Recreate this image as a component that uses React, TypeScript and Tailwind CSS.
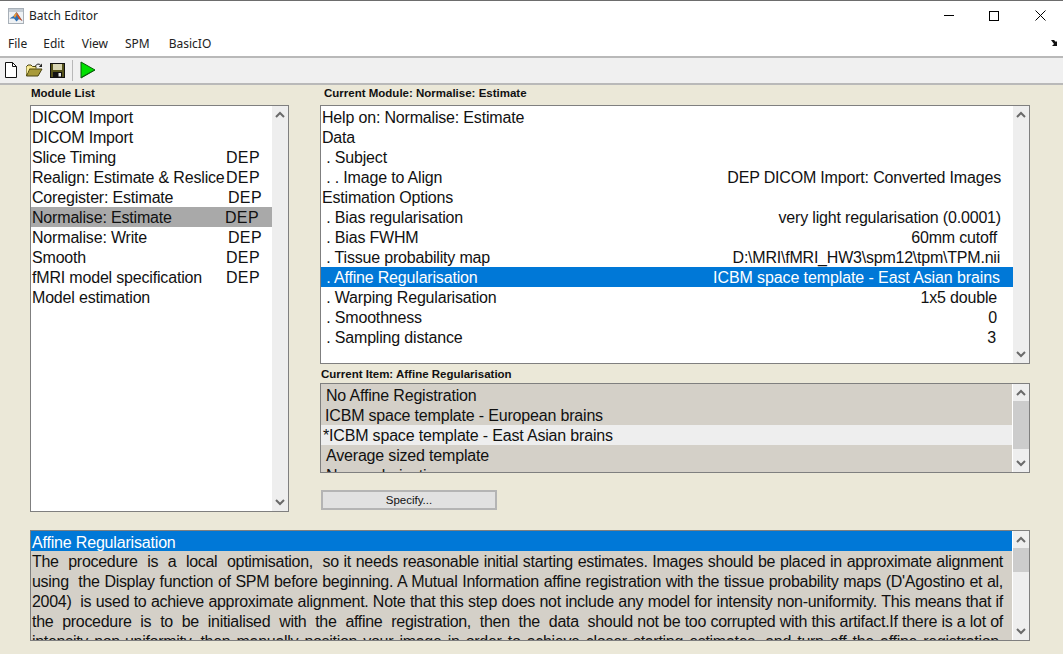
import React from "react";

const sans = "font-['Liberation_Sans',Arial,sans-serif]";

function Up() {
  return (
    <svg width="10" height="7" viewBox="0 0 10 7" className="block">
      <path d="M1 6 L5 2 L9 6" fill="none" stroke="#6a6a6a" strokeWidth="2" />
    </svg>
  );
}
function Down() {
  return (
    <svg width="10" height="7" viewBox="0 0 10 7" className="block">
      <path d="M1 1 L5 5 L9 1" fill="none" stroke="#6a6a6a" strokeWidth="2" />
    </svg>
  );
}

function Scrollbar({ thumbH = 0 }: { thumbH?: number }) {
  return (
    <div className="w-[16px] shrink-0 h-full bg-[#eeeeee] flex flex-col justify-between">
      <div className="h-[17px] shrink-0 flex items-center justify-center">
        <Up />
      </div>
      {thumbH > 0 && (
        <div className="flex-1 min-h-0">
          <div className="bg-[#cccccc]" style={{ height: thumbH }} />
        </div>
      )}
      <div className="h-[17px] shrink-0 flex items-center justify-center">
        <Down />
      </div>
    </div>
  );
}

const modules: [string, string, string][] = [
  ["DICOM Import", "", ""],
  ["DICOM Import", "", ""],
  ["Slice Timing", "DEP", "pr-[12px]"],
  ["Realign: Estimate & Reslice", "DEP", "pr-[12px]"],
  ["Coregister: Estimate", "DEP", "pr-[10px]"],
  ["Normalise: Estimate", "DEP", "pr-[13px]"],
  ["Normalise: Write", "DEP", "pr-[10px]"],
  ["Smooth", "DEP", "pr-[12px]"],
  ["fMRI model specification", "DEP", "pr-[12px]"],
  ["Model estimation", "", ""],
];

const items: [string, string, string, string][] = [
  ["Help on: Normalise: Estimate", "", "", ""],
  ["Data", "", "", ""],
  [" . Subject", "", "", ""],
  [" . . Image to Align", "DEP DICOM Import: Converted Images", "pr-[12px]", ""],
  ["Estimation Options", "", "", ""],
  [" . Bias regularisation", "very light regularisation (0.0001)", "pr-[12px]", ""],
  [" . Bias FWHM", "60mm cutoff", "pr-[16px]", ""],
  [" . Tissue probability map", "D:\\MRI\\fMRI_HW3\\spm12\\tpm\\TPM.nii", "pr-[13px]", "tracking-[-0.22px]"],
  [" . Affine Regularisation", "ICBM space template - East Asian brains", "pr-[13px]", "tracking-[-0.1px]"],
  [" . Warping Regularisation", "1x5 double", "pr-[16px]", ""],
  [" . Smoothness", "0", "pr-[16px]", ""],
  [" . Sampling distance", "3", "pr-[17px]", ""],
];

const helpLines = [
  "The  procedure  is  a  local  optimisation,  so it needs reasonable initial starting estimates. Images should be placed in approximate alignment",
  "using  the Display function of SPM before beginning. A Mutual Information affine registration with the tissue probability maps (D'Agostino et al,",
  "2004)  is used to achieve approximate alignment. Note that this step does not include any model for intensity non-uniformity. This means that if",
  "the  procedure  is  to  be  initialised  with  the  affine  registration,  then  the  data  should not be too corrupted with this artifact.If there is a lot of",
  "intensity non-uniformity, then manually position your image in order to achieve closer starting estimates, and turn off the affine registration.",
];

function Label({ children, className = "" }: { children: React.ReactNode; className?: string }) {
  return <div className={`text-[11.5px] leading-[13px] font-bold text-[#111] ${className}`}>{children}</div>;
}

export default function App() {
  return (
    <div className={`w-[1063px] h-[654px] overflow-hidden flex flex-col bg-[#ebe8d8] text-[#111] ${sans}`}>
      {/* Title bar */}
      <div className="h-[33px] shrink-0 bg-white border-t border-[#6d6d6d] flex items-center pl-[8px] pb-[3px] font-['Noto_Sans',sans-serif]">
        <svg width="16" height="16" viewBox="0 0 16 16" className="shrink-0">
          <rect x="0.5" y="0.5" width="15" height="15" fill="#eef1f4" stroke="#a8b0b8" />
          <rect x="1" y="1" width="14" height="3" fill="#c4ccd4" />
          <path d="M1.5 10.5 L5.5 8 L8.5 4 L14.5 13 L11 11 L8.5 13.5 L6 10.5 Z" fill="#2f6fb0" />
          <path d="M8.5 4 L14.5 13 L11 11 L8.6 7 Z" fill="#d9541e" />
          <path d="M5.5 8 L8.5 4 L8.6 7 L7 10 Z" fill="#f09a32" />
        </svg>
        <span className="ml-[5px] text-[12px] text-[#222]">Batch Editor</span>
        <div className="ml-auto flex items-center">
          <div className="w-[45px] flex justify-center">
            <div className="w-[10px] h-px bg-black" />
          </div>
          <div className="w-[46px] pr-[1px] flex justify-center">
            <div className="w-[10px] h-[10px] border border-black" />
          </div>
          <div className="w-[46px] flex justify-center">
            <svg width="11" height="11" viewBox="0 0 11 11">
              <path d="M0.5 0.5 L10.5 10.5 M10.5 0.5 L0.5 10.5" stroke="#000" strokeWidth="1" />
            </svg>
          </div>
        </div>
      </div>

      {/* Menu bar */}
      <div className="h-[25px] shrink-0 bg-white border-b-2 border-[#b9b9b9] flex items-center pl-[8px] pb-[2px] pr-[4px] text-[12px] text-[#222] font-['Noto_Sans',sans-serif]">
        <span>File</span>
        <span className="ml-[16px]">Edit</span>
        <span className="ml-[17px]">View</span>
        <span className="ml-[17px]">SPM</span>
        <span className="ml-[19px]">BasicIO</span>
        <svg width="8" height="7" viewBox="0 0 8 7" className="ml-auto">
          <path d="M0 0 H3 L5 2 L6 1 V6 H1 L3 4 Z" fill="#111" />
        </svg>
      </div>

      {/* Toolbar */}
      <div className="h-[27px] shrink-0 bg-[#f0f0f0] border-b-2 border-[#b9b9b9] flex items-center pl-[4px] pb-[1px]">
        <svg width="14" height="16" viewBox="0 0 14 16">
          <path d="M1.5 0.5 H8.5 L12.5 4.5 V15.5 H1.5 Z" fill="#fff" stroke="#111" />
          <path d="M8.5 0.5 V4.5 H12.5" fill="none" stroke="#111" />
        </svg>
        <svg width="17" height="14" viewBox="0 0 17 14" className="ml-[8px]">
          <path d="M0.5 13 V3.5 L2 2 H5 L6.5 3.5 H10 V5.5" fill="#f6e58a" stroke="#4a4410" />
          <path d="M0.5 13 L3.5 6 H16 L12 13 Z" fill="#a89a3a" stroke="#4a4410" />
          <path d="M3 6 L0.5 12 V4 H3 Z" fill="#fbf0a0" />
          <path d="M9.5 3 C10.5 0.8 13 0.5 14.5 2" fill="none" stroke="#222" />
          <path d="M16 0.5 V4 H12.8 Z" fill="#222" />
        </svg>
        <svg width="15" height="15" viewBox="0 0 15 15" className="ml-[7px]">
          <rect x="0.5" y="0.5" width="14" height="14" fill="#55521a" stroke="#111" />
          <rect x="3" y="1" width="9" height="6" fill="#d9d6b4" />
          <rect x="3" y="9" width="9" height="5" fill="#111" />
          <rect x="8.5" y="10" width="2.5" height="3.5" fill="#e8e8e8" />
        </svg>
        <div className="ml-[7px] w-px h-[21px] bg-[#b8b8b8]" />
        <svg width="16" height="18" viewBox="0 0 16 18" className="ml-[7px]">
          <path d="M1 1 L15 9 L1 17 Z" fill="#00e000" stroke="#0a5a0a" />
          <path d="M2 15.5 L14 9 L15 9 L1 17 Z" fill="#0a5a0a" />
        </svg>
      </div>

      {/* Body */}
      <div className="flex-1 min-h-0 flex flex-col pl-[30px] pr-[33px] pt-[1px]">
        <div className="flex gap-[31px] h-[427px] shrink-0">
          {/* Left column */}
          <div className="w-[259px] shrink-0 flex flex-col">
            <Label className="pl-[1px] h-[15px] flex items-center">Module List</Label>
            <div className="mt-[4px] h-[407px] border border-[#7f7f7f] bg-white flex text-[16px] leading-[22px] tracking-[-0.18px]">
              <div className="flex-1 min-w-0 pt-[1px]">
                {modules.map(([name, dep, pad], i) => (
                  <div
                    key={i}
                    className={`h-[20px] pl-[1px] flex justify-between whitespace-nowrap ${i === 5 ? "bg-[#a9a9a9]" : ""} ${pad}`}
                  >
                    <span>{name}</span>
                    <span className="tracking-[0.4px]">{dep}</span>
                  </div>
                ))}
              </div>
              <Scrollbar />
            </div>
          </div>

          {/* Right column */}
          <div className="w-[710px] shrink-0 flex flex-col">
            <Label className="pl-[4px] h-[15px] flex items-center">Current Module: Normalise: Estimate</Label>
            <div className="mt-[4px] h-[259px] border border-[#7f7f7f] bg-white flex text-[16px] leading-[22px] tracking-[-0.18px]">
              <div className="flex-1 min-w-0 pt-[1px]">
                {items.map(([l, r, pad, track], i) => (
                  <div
                    key={i}
                    className={`h-[20px] pl-[1px] flex justify-between whitespace-pre ${pad} ${i === 8 ? "bg-[#0078d7] text-white" : ""}`}
                  >
                    <span>{l}</span>
                    <span className={track}>{r}</span>
                  </div>
                ))}
              </div>
              <Scrollbar />
            </div>
            <Label className="mt-[3px] mb-[1px] pl-[1px] h-[15px] flex items-center">Current Item: Affine Regularisation</Label>
            <div className="h-[90px] border border-[#7f7f7f] bg-[#d4d0c8] flex text-[16px] leading-[22px] tracking-[-0.18px]">
              <div className="flex-1 min-w-0 overflow-hidden pt-[1px]">
                <div className="h-[20px] pl-[5px] whitespace-nowrap">No Affine Registration</div>
                <div className="h-[20px] pl-[4px] whitespace-nowrap">ICBM space template - European brains</div>
                <div className="h-[20px] pl-[2px] whitespace-nowrap bg-[#eeeeee]">*ICBM space template - East Asian brains</div>
                <div className="h-[20px] pl-[5px] whitespace-nowrap">Average sized template</div>
                <div className="h-[20px] pl-[5px] whitespace-nowrap">No regularisation</div>
              </div>
              <div className="w-px bg-white shrink-0" />
              <Scrollbar thumbH={48} />
            </div>
            <button className="mt-[17px] ml-[1px] w-[176px] h-[20px] pt-[1px] border-2 border-[#b4b4b4] bg-[#e1e1e1] text-[11.5px] leading-[15px] text-[#111]">
              Specify...
            </button>
          </div>
        </div>

        {/* Help box */}
        <div className="mt-[17px] h-[111px] w-[1000px] shrink-0 border border-[#7f7f7f] bg-[#d4d0c8] flex text-[16px] leading-[22px] tracking-[-0.18px]">
          <div className="flex-1 min-w-0 overflow-hidden">
            <div className="h-[20px] pl-[1px] bg-[#0078d7] text-white whitespace-nowrap leading-[24px] overflow-hidden">Affine Regularisation</div>
            {helpLines.map((t, i) => (
              <div
                key={i}
                className="h-[20px] overflow-hidden pl-[1px] pr-[9px] tracking-[-0.3px] text-justify [text-align-last:justify] whitespace-pre-wrap"
              >
                {t}
              </div>
            ))}
          </div>
          <div className="w-px bg-white shrink-0" />
          <Scrollbar thumbH={24} />
        </div>
      </div>
    </div>
  );
}
